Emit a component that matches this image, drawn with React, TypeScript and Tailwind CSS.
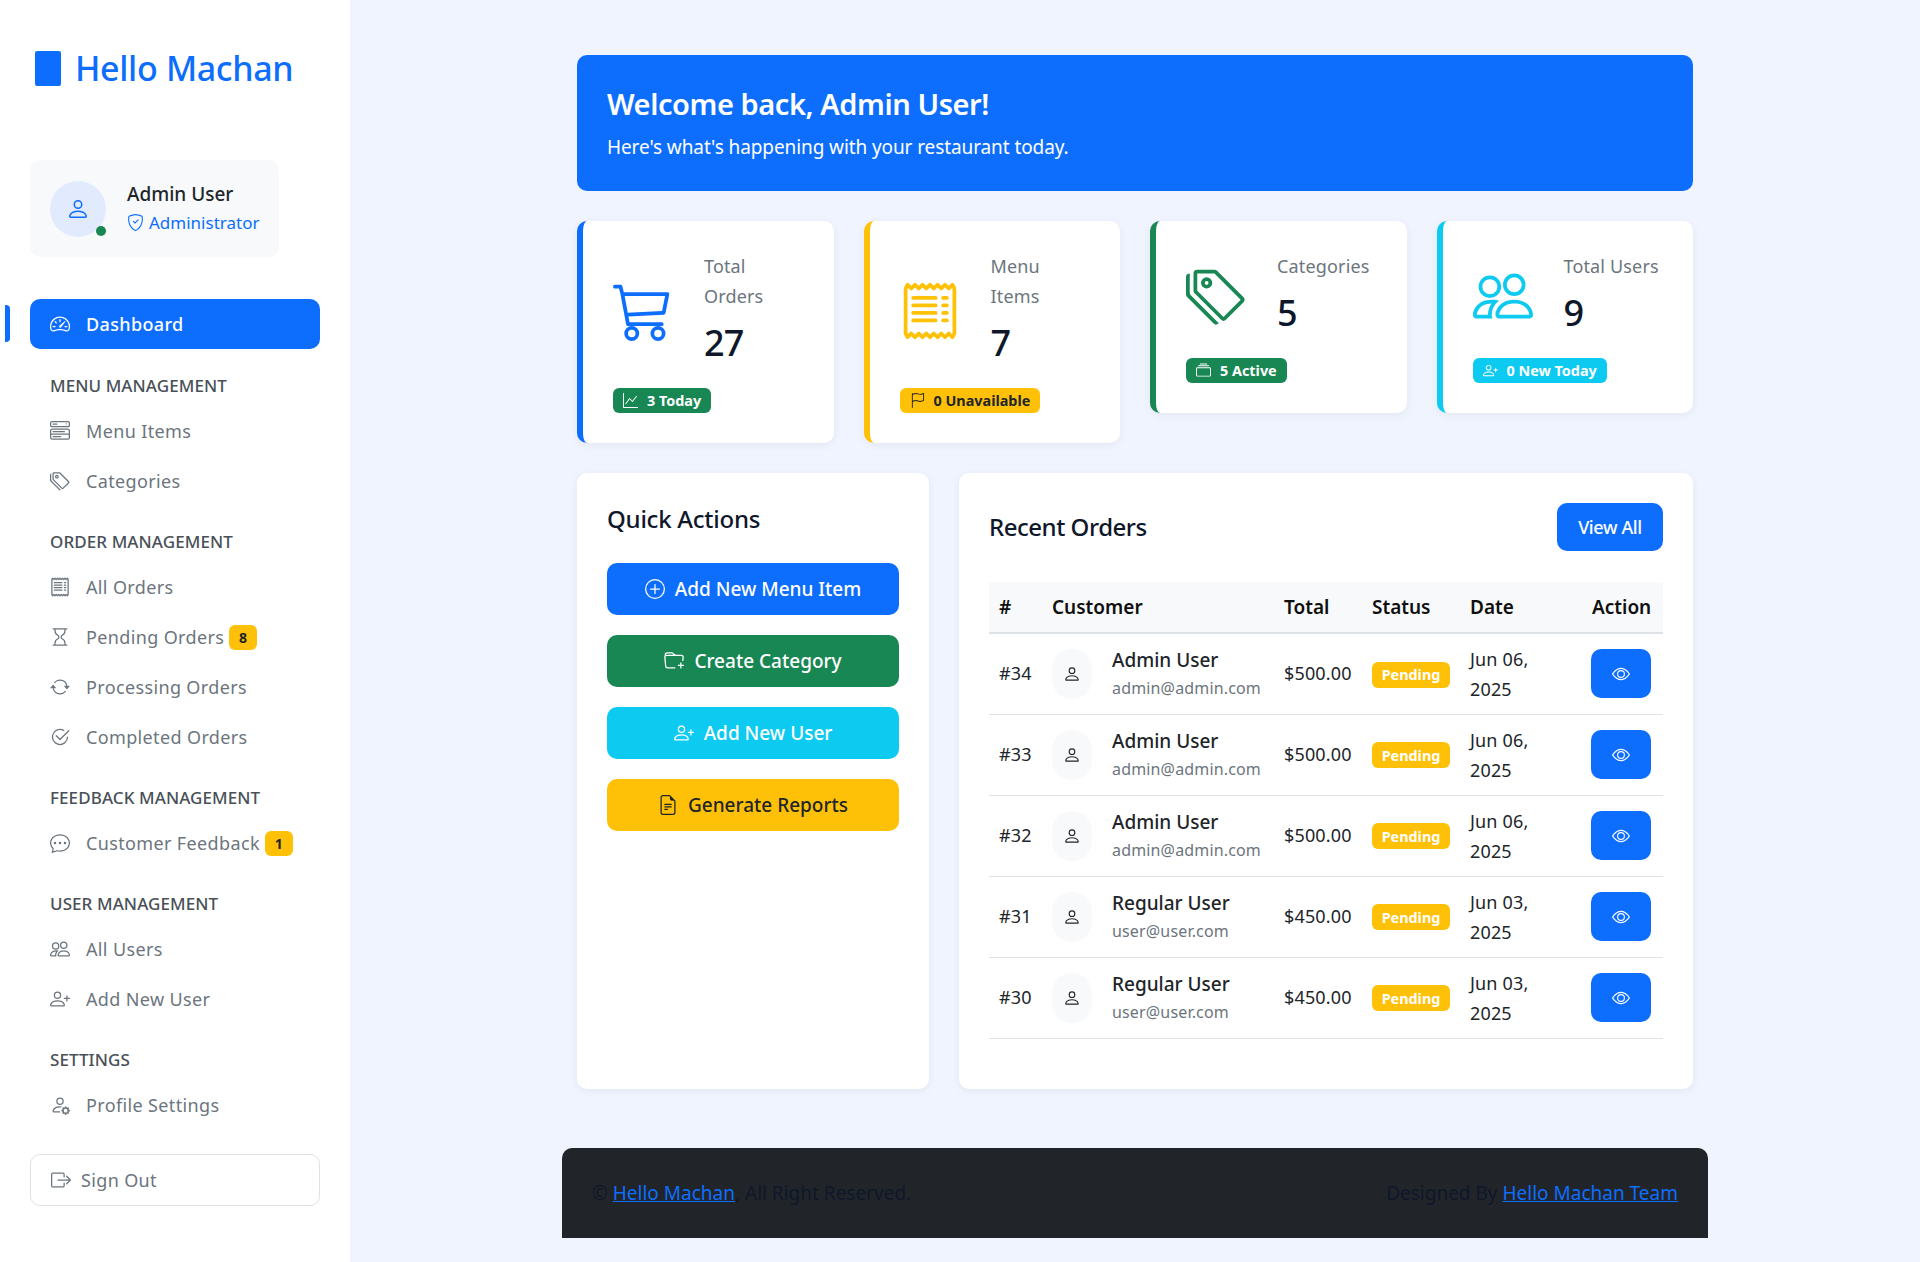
import type { ReactNode } from 'react';
import clsx from 'clsx';
import {
  BsArrowRepeat,
  BsBoxArrowRight,
  BsCart3,
  BsChatDots,
  BsCheck2Circle,
  BsCollection,
  BsEye,
  BsFileEarmarkText,
  BsFlag,
  BsFolderPlus,
  BsGraphUp,
  BsHourglass,
  BsMenuButtonWide,
  BsPeople,
  BsPerson,
  BsPersonGear,
  BsPersonPlus,
  BsPlusCircle,
  BsReceipt,
  BsShieldCheck,
  BsSpeedometer2,
  BsTags,
} from 'react-icons/bs';
import type { IconType } from 'react-icons';

function NavHeading({ children }: { children: ReactNode }) {
  return (
    <div className="pl-5 pt-[23px] pb-[8px] h-[56px] text-[17px] leading-[25px] font-medium tracking-[0.005em] text-[#495057]">
      {children}
    </div>
  );
}

function NavItem({ icon: Icon, label, badge }: { icon: IconType; label: string; badge?: string }) {
  return (
    <div className="h-[50px] pl-5 flex items-center text-[#6c757d] text-[18px] tracking-[0.02em]">
      <Icon size={20} className="mr-4 shrink-0" />
      <span>{label}</span>
      {badge && (
        <span className="ml-[5px] w-7 h-[25px] rounded-md bg-[#ffc107] text-[#212529] text-[14px] font-bold flex items-center justify-center">
          {badge}
        </span>
      )}
    </div>
  );
}

function Sidebar() {
  return (
    <aside className="w-[350px] shrink-0 bg-white h-[1262px] px-[30px] relative">
      <div className="h-[160px] pt-[51px] flex items-start">
        <div className="w-[26px] h-[35px] ml-[5px] mr-[14px] bg-[#0d6efd] rounded-[2px]" />
        <div className="text-[34px] leading-[35px] font-medium tracking-[-0.01em] text-[#0d6efd]">Hello Machan</div>
      </div>
      <div className="w-[249px] h-[97px] bg-[#f8f9fa] rounded-[10px] flex items-center pl-5">
        <div className="relative w-14 h-14 rounded-full bg-[#e1ebfd] flex items-center justify-center text-[#0d6efd] mr-[21px]">
          <BsPerson size={24} />
          <span className="absolute right-0 bottom-[1px] w-[10px] h-[10px] rounded-full bg-[#198754]" />
        </div>
        <div>
          <div className="text-[19px] leading-[28px] tracking-normal font-medium text-[#212529]">Admin User</div>
          <div className="flex items-center text-[#0d6efd] text-[17px] leading-[30px] tracking-normal">
            <BsShieldCheck size={17} className="mr-[5px]" />
            Administrator
          </div>
        </div>
      </div>
      <div className="absolute left-[5px] top-[305px] w-[5px] h-[37px] bg-[#0d6efd] rounded-r" />
      <nav className="mt-[42px]">
        <div className="h-[50px] mb-[1px] pl-5 flex items-center rounded-[10px] bg-[#0d6efd] text-white text-[18px] tracking-[0.02em] font-medium">
          <BsSpeedometer2 size={20} className="mr-4" />
          Dashboard
        </div>
        <NavHeading>MENU MANAGEMENT</NavHeading>
        <NavItem icon={BsMenuButtonWide} label="Menu Items" />
        <NavItem icon={BsTags} label="Categories" />
        <NavHeading>ORDER MANAGEMENT</NavHeading>
        <NavItem icon={BsReceipt} label="All Orders" />
        <NavItem icon={BsHourglass} label="Pending Orders" badge="8" />
        <NavItem icon={BsArrowRepeat} label="Processing Orders" />
        <NavItem icon={BsCheck2Circle} label="Completed Orders" />
        <NavHeading>FEEDBACK MANAGEMENT</NavHeading>
        <NavItem icon={BsChatDots} label="Customer Feedback" badge="1" />
        <NavHeading>USER MANAGEMENT</NavHeading>
        <NavItem icon={BsPeople} label="All Users" />
        <NavItem icon={BsPersonPlus} label="Add New User" />
        <NavHeading>SETTINGS</NavHeading>
        <NavItem icon={BsPersonGear} label="Profile Settings" />
      </nav>
      <div className="mt-6 h-[52px] border border-[#dee2e6] rounded-[10px] pl-5 flex items-center text-[#6c757d] text-[18px] tracking-[0.02em]">
        <BsBoxArrowRight size={20} className="mr-[10px]" />
        Sign Out
      </div>
    </aside>
  );
}

interface StatCardProps {
  border: string;
  iconColor: string;
  icon: IconType;
  title: ReactNode;
  value: string;
  badgeIcon: IconType;
  badge: string;
  badgeClass: string;
}

function StatCard({ border, iconColor, icon: Icon, title, value, badgeIcon: BadgeIcon, badge, badgeClass }: StatCardProps) {
  return (
    <div className={clsx('bg-white rounded-[10px] border-l-[6px] shadow-[0_2px_8px_rgba(0,0,0,0.06)] pl-[30px] pr-5 pt-[30px] pb-[29px]', border)}>
      <div className="flex items-center">
        <Icon size={60} className={clsx('shrink-0 mr-[31px]', iconColor)} />
        <div>
          <div className="text-[18px] leading-[30px] text-[#6c757d]">{title}</div>
          <div className="text-[36px] leading-[54px] font-medium tracking-[-0.02em] text-[#0f172a] mt-[5px]">{value}</div>
        </div>
      </div>
      <div className={clsx('mt-[18px] inline-flex items-center h-[25px] px-[10px] rounded-md text-[14.4px] tracking-normal font-bold', badgeClass)}>
        <BadgeIcon size={15} className="mr-[9px]" />
        {badge}
      </div>
    </div>
  );
}

function ActionButton({ icon: Icon, label, className }: { icon: IconType; label: string; className: string }) {
  return (
    <div className={clsx('h-[52px] rounded-[10px] flex items-center justify-center text-[19px] tracking-normal font-medium', className)}>
      <Icon size={20} className="mr-[10px]" />
      {label}
    </div>
  );
}

const orders = [
  { id: '#34', name: 'Admin User', email: 'admin@admin.com', total: '$500.00', date: 'Jun 06, 2025' },
  { id: '#33', name: 'Admin User', email: 'admin@admin.com', total: '$500.00', date: 'Jun 06, 2025' },
  { id: '#32', name: 'Admin User', email: 'admin@admin.com', total: '$500.00', date: 'Jun 06, 2025' },
  { id: '#31', name: 'Regular User', email: 'user@user.com', total: '$450.00', date: 'Jun 03, 2025' },
  { id: '#30', name: 'Regular User', email: 'user@user.com', total: '$450.00', date: 'Jun 03, 2025' },
];

function RecentOrders() {
  return (
    <div className="flex-1 bg-white rounded-[10px] shadow-[0_2px_8px_rgba(0,0,0,0.06)] px-[30px] pt-[30px]">
      <div className="flex items-center justify-between h-[48px] mb-[31px]">
        <h2 className="text-[24px] font-medium tracking-[-0.02em] text-[#0f172a]">Recent Orders</h2>
        <div className="w-[106px] h-[48px] rounded-[10px] bg-[#0d6efd] text-white text-[18px] tracking-[-0.02em] font-medium flex items-center justify-center">
          View All
        </div>
      </div>
      <table className="w-full table-fixed text-[18px] text-[#212529]">
        <thead>
          <tr className="bg-[#f8f9fa] border-b-2 border-[#dee2e6] h-[51px] text-left text-[19px] tracking-normal text-[#0f0f0f]">
            <th className="w-[53px] pl-[10px] font-semibold">#</th>
            <th className="w-[232px] pl-[10px] font-semibold">Customer</th>
            <th className="w-[88px] pl-[10px] font-semibold">Total</th>
            <th className="w-[98px] pl-[10px] font-semibold">Status</th>
            <th className="w-[122px] pl-[10px] font-semibold">Date</th>
            <th className="pl-[10px] font-semibold">Action</th>
          </tr>
        </thead>
        <tbody>
          {orders.map((o) => (
            <tr key={o.id} className="border-b border-[#dee2e6] h-[81px]">
              <td className="pl-[10px]">{o.id}</td>
              <td className="pl-[10px]">
                <div className="flex items-center">
                  <div className="w-10 h-[50px] rounded-full bg-[#f8f9fa] flex items-center justify-center mr-5 shrink-0">
                    <BsPerson size={18} />
                  </div>
                  <div>
                    <div className="leading-[28px] text-[19px] tracking-normal font-medium">{o.name}</div>
                    <div className="leading-[28px] text-[16px] text-[#6c757d]">{o.email}</div>
                  </div>
                </div>
              </td>
              <td className="pl-[10px]">{o.total}</td>
              <td className="pl-[10px]">
                <span className="inline-flex items-center justify-center w-[78px] h-[26px] rounded-md bg-[#ffc107] text-white text-[14.4px] tracking-normal font-bold">
                  Pending
                </span>
              </td>
              <td className="pl-[10px] pr-6 leading-[30px]">{o.date}</td>
              <td className="pl-[9px]">
                <div className="w-[60px] h-[49px] rounded-[10px] bg-[#0d6efd] text-white flex items-center justify-center">
                  <BsEye size={18} />
                </div>
              </td>
            </tr>
          ))}
        </tbody>
      </table>
    </div>
  );
}

export default function App() {
  return (
    <div className="flex min-h-[1262px] bg-[#f0f4ff] font-['Noto_Sans',sans-serif] tracking-[0.01em]">
      <Sidebar />
      <main className="flex-1">
        <div className="w-[1146px] mx-auto pt-[55px]">
          <div className="px-[15px]">
            <div className="h-[136px] rounded-[10px] bg-[#0d6efd] text-white pl-[30px] pt-[29px]">
              <h1 className="text-[29px] leading-[40px] tracking-[-0.015em] font-semibold">Welcome back, Admin User!</h1>
              <p className="text-[19px] leading-[30px] tracking-[-0.005em] mt-[8px]">Here's what's happening with your restaurant today.</p>
            </div>
            <div className="grid grid-cols-4 gap-[30px] items-start mt-[30px]">
              <StatCard border="border-[#0d6efd]" iconColor="text-[#0d6efd]" icon={BsCart3} title={<>Total<br />Orders</>} value="27" badgeIcon={BsGraphUp} badge="3 Today" badgeClass="bg-[#198754] text-white" />
              <StatCard border="border-[#ffc107]" iconColor="text-[#ffc107]" icon={BsReceipt} title={<>Menu<br />Items</>} value="7" badgeIcon={BsFlag} badge="0 Unavailable" badgeClass="bg-[#ffc107] text-[#212529]" />
              <StatCard border="border-[#198754]" iconColor="text-[#198754]" icon={BsTags} title="Categories" value="5" badgeIcon={BsCollection} badge="5 Active" badgeClass="bg-[#198754] text-white" />
              <StatCard border="border-[#0dcaf0]" iconColor="text-[#0dcaf0]" icon={BsPeople} title="Total Users" value="9" badgeIcon={BsPersonPlus} badge="0 New Today" badgeClass="bg-[#0dcaf0] text-white" />
            </div>
            <div className="flex gap-[30px] mt-[30px] h-[616px]">
              <div className="w-[352px] bg-white rounded-[10px] shadow-[0_2px_8px_rgba(0,0,0,0.06)] px-[30px] pt-[30px]">
                <h2 className="text-[24px] leading-[32px] font-medium tracking-[-0.01em] text-[#0f172a] mb-[28px]">Quick Actions</h2>
                <div className="flex flex-col gap-5">
                  <ActionButton icon={BsPlusCircle} label="Add New Menu Item" className="bg-[#0d6efd] text-white" />
                  <ActionButton icon={BsFolderPlus} label="Create Category" className="bg-[#198754] text-white" />
                  <ActionButton icon={BsPersonPlus} label="Add New User" className="bg-[#0dcaf0] text-white" />
                  <ActionButton icon={BsFileEarmarkText} label="Generate Reports" className="bg-[#ffc107] text-[#212529]" />
                </div>
              </div>
              <RecentOrders />
            </div>
          </div>
          <footer className="mt-[59px] h-[90px] bg-[#212529] rounded-t-[10px] px-[30px] flex items-center justify-between text-[19px] tracking-normal text-[#0f172a]">
            <div>© <a href="#" className="text-[#0d6efd] underline">Hello Machan</a>, All Right Reserved.</div>
            <div>Designed By <a href="#" className="text-[#0d6efd] underline">Hello Machan Team</a></div>
          </footer>
        </div>
      </main>
    </div>
  );
}
